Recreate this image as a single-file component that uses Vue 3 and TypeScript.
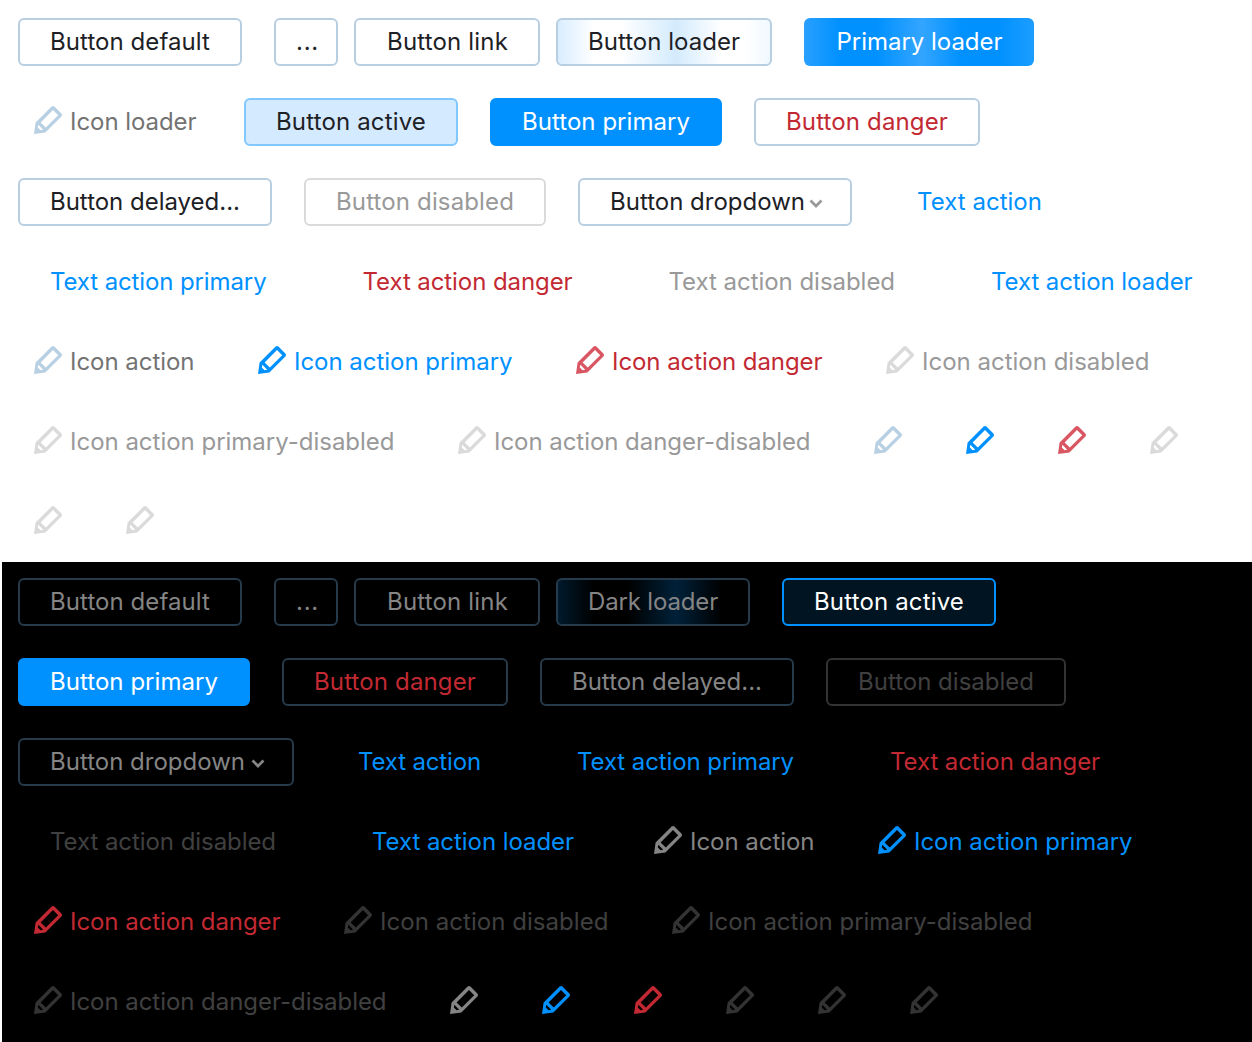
<script setup lang="ts">
import { onMounted, ref } from 'vue'

interface Item {
  label?: string
  kind: 'btn' | 'text' | 'icon'
  look?: string
  width: number
  tight?: boolean
  chevron?: boolean
}

const b = (label: string, width: number, look = '', extra: Partial<Item> = {}): Item => ({ label, width, look, kind: 'btn', ...extra })
const t = (label: string, width: number, look = 'blue'): Item => ({ label, width, look, kind: 'text' })
const i = (label: string, width: number, look = ''): Item => ({ label, width, look, kind: 'icon' })

const light: Item[][] = [
  [b('Button default', 224), b('...', 64, '', { tight: true }), b('Button link', 186, '', { tight: true }), b('Button loader', 216, 'loader'), b('Primary loader', 230, 'primary primary-loader')],
  [i('Icon loader', 194), b('Button active', 214, 'active'), b('Button primary', 232, 'primary'), b('Button danger', 226, 'danger')],
  [b('Button delayed...', 254), b('Button disabled', 242, 'disabled'), b('Button dropdown', 274, '', { chevron: true }), t('Text action', 189, 'blue nudged')],
  [t('Text action primary', 280.5), t('Text action danger', 274, 'danger'), t('Text action disabled', 290.5, 'disabled'), t('Text action loader', 265.5)],
  [i('Icon action', 192), i('Icon action primary', 286, 'blue'), i('Icon action danger', 278, 'danger'), i('Icon action disabled', 295, 'disabled')],
  [i('Icon action primary-disabled', 392, 'disabled'), i('Icon action danger-disabled', 384, 'disabled'), i('', 60), i('', 60, 'blue'), i('', 60, 'danger'), i('', 60, 'disabled')],
  [i('', 60, 'disabled'), i('', 60, 'disabled')],
]

const dark: Item[][] = [
  [b('Button default', 224), b('...', 64, '', { tight: true }), b('Button link', 186, '', { tight: true }), b('Dark loader', 194, 'loader'), b('Button active', 214, 'active')],
  [b('Button primary', 232, 'primary'), b('Button danger', 226, 'danger'), b('Button delayed...', 254), b('Button disabled', 240, 'disabled')],
  [b('Button dropdown', 276, '', { chevron: true }), t('Text action', 187), t('Text action primary', 281), t('Text action danger', 274, 'danger')],
  [t('Text action disabled', 290, 'disabled'), t('Text action loader', 266), i('Icon action', 192), i('Icon action primary', 286, 'blue')],
  [i('Icon action danger', 278, 'danger'), i('Icon action disabled', 296, 'disabled'), i('Icon action primary-disabled', 392, 'disabled')],
  [i('Icon action danger-disabled', 384, 'disabled'), i('', 60), i('', 60, 'blue'), i('', 60, 'danger'), i('', 60, 'disabled'), i('', 60, 'disabled'), i('', 60, 'disabled')],
]

const panels = [
  { theme: 'light', rows: light },
  { theme: 'dark', rows: dark },
]

const root = ref<HTMLElement | null>(null)

// Track each label so that it fills the space between its control's paddings.
onMounted(() => {
  root.value?.querySelectorAll<HTMLElement>('.label').forEach((el) => {
    const natural = el.getBoundingClientRect().width
    const room = Number(el.dataset.room)
    const count = (el.textContent ?? '').length
    el.style.letterSpacing = `${(room - natural) / count}px`
  })
})

function room(item: Item): number {
  if (item.label === '...') return 23
  if (item.chevron) return 195
  if (item.tight) return 121
  return item.width - (item.kind === 'icon' ? 67.5 : 64)
}
</script>

<template>
  <main ref="root" class="page">
    <section v-for="panel in panels" :key="panel.theme" class="panel" :class="panel.theme">
      <div v-for="(row, r) in panel.rows" :key="r" class="row">
        <component
          :is="item.kind === 'btn' ? 'button' : 'a'"
          v-for="(item, n) in row"
          :key="n"
          class="item"
          :class="[item.kind, item.look, { tight: item.tight, dots: item.label === '...' }]"
          :style="{ width: item.width + 'px' }"
        >
          <svg v-if="item.kind === 'icon'" class="pencil" viewBox="0 0 28 28" width="28" height="28">
            <path
              fill-rule="evenodd"
              d="M0 28 L1.6 16.6 L17.6 0.6 Q19 -0.6 20.4 0.6 L27.4 7.6 Q28.6 9 27.4 10.4 L11.4 26.4 Z M19 4 L6.6 16.4 L11.8 21.6 L24.2 9.2 Z M4.4 18.8 L3.8 21.6 L6.6 24.2 L9.2 23.7 Z"
            />
          </svg>
          <span v-if="item.label" class="label" :data-room="room(item)">{{ item.label }}</span>
          <svg v-if="item.chevron" class="chevron" viewBox="0 0 14 9" width="14" height="9">
            <path d="M1.5 1.5 L7 7 L12.5 1.5" />
          </svg>
        </component>
      </div>
    </section>
  </main>
</template>

<style>
body {
  margin: 0;
  background: #fff;
}
</style>

<style scoped>
.page {
  height: 1042px;
  padding: 2px 0 0 2px;
  box-sizing: border-box;
  overflow: hidden;
  font-family: Inter, 'Liberation Sans', sans-serif;
  font-size: 24px;
  font-weight: 420;
}
.panel {
  display: flex;
  flex-direction: column;
  gap: 32px;
  padding: 16px;
}
.light {
  --text: #1d2125;
  --line: #b8cfe2;
  --icon: #b8d0e4;
  --muted: #737373;
  --off: #999;
  --off-line: #dadada;
  --chev: #999;
  background: #fff;
}
.dark {
  --text: #858585;
  --line: #253a4a;
  --icon: #858585;
  --muted: #858585;
  --off: #404040;
  --off-line: #333;
  --chev: #858585;
  background: #000;
}
.row {
  display: flex;
  gap: 32px;
  height: 48px;
}
.item {
  display: flex;
  align-items: center;
  flex: none;
  box-sizing: border-box;
  height: 48px;
  margin: 0;
  padding: 0 32px;
  border: 0;
  border-radius: 6px;
  background: none;
  color: var(--text);
  font: inherit;
  line-height: 46px;
  white-space: nowrap;
}
.btn {
  padding: 0 30px;
  border: 2px solid var(--line);
}
.dots {
  padding-left: 20px;
}
.tight {
  margin-right: -16px;
}
.tight:not(.dots) {
  padding-left: 31px;
}
.nudged {
  padding-left: 33px;
}
.icon {
  padding: 0 16px;
  color: var(--muted);
}
.pencil {
  flex: none;
  margin: -4px 8px 0 0;
  fill: var(--icon);
}
.chevron {
  flex: none;
  margin: 2px 0 0 4px;
  fill: none;
  stroke: var(--chev);
  stroke-width: 2.7;
}
.dark .chevron {
  margin-left: 6px;
}
.blue {
  --icon: #0091ff;
  color: #0091ff;
}
.danger {
  --icon: #d95762;
  color: #c22933;
}
.dark .danger {
  --icon: #c22933;
}
.disabled {
  --icon: var(--off-line);
  color: var(--off);
}
.btn.disabled {
  border-color: var(--off-line);
}
.primary {
  border-color: #0091ff;
  background: #0091ff;
  color: #fff;
}
.light .active {
  border-color: #80c8ff;
  background: #d4eaff;
}
.dark .active {
  border-color: #0091ff;
  background: #001422;
  color: #fff;
}
.light .loader {
  background: linear-gradient(90deg, #d9edff 0, #fff 36px, #fff 63px, #d4ebfd 118px, #fff 164px, #fff 188px, #f0f8ff 212px);
}
.primary-loader {
  border: 0;
  padding: 0 32.5px;
  background: linear-gradient(90deg, #29a0ff 0, #0091ff 36px, #0091ff 72px, #33a5ff 118px, #0091ff 158px, #0091ff 194px, #1c9dff 230px);
}
.dark .loader {
  background: linear-gradient(90deg, #001a2c 0, #000 36px, #000 70px, #002139 118px, #000 164px, #000 190px);
}
</style>
